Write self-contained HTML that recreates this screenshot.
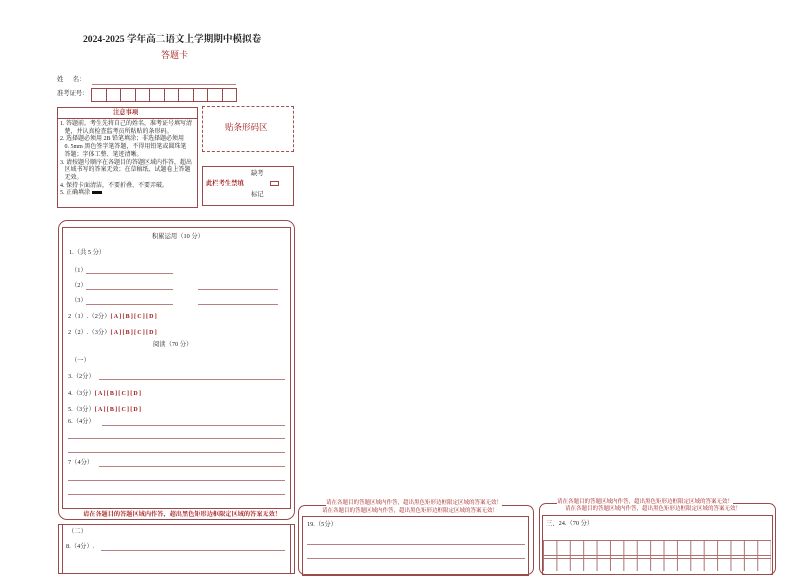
<!DOCTYPE html>
<html><head><meta charset="utf-8"><style>
body{margin:0;width:794px;height:562px;background:#fff;position:relative;overflow:hidden;font-family:"Liberation Serif","Noto Serif CJK SC","Noto Sans CJK SC",serif;color:#222;}
.a{position:absolute;white-space:nowrap;line-height:1;}
.s{font-size:6.3px;}
.r{color:#a01818;}
.b{position:absolute;border:1px solid #9a4a4a;box-sizing:border-box;}
.l{position:absolute;height:0;border-top:1px solid #b88080;}
.ab{color:#a01818;font-weight:bold;font-size:6px;letter-spacing:1.2px;}
</style></head><body>
<div class="a" style="left:83px;top:35px;font-size:9.6px;font-weight:bold;">2024-2025 学年高二语文上学期期中模拟卷</div>
<div class="a r" style="left:161px;top:51px;font-size:9px;">答题卡</div>
<div class="a s" style="left:57px;top:77px;">姓&nbsp;&nbsp;&nbsp;&nbsp;&nbsp;&nbsp;名：</div>
<div class="l" style="left:92px;top:84px;width:144px;"></div>
<div class="a s" style="left:57px;top:91px;">准考证号：</div>
<div style="position:absolute;left:91px;top:88px;display:flex;">
<div class="b" style="position:relative;width:15.5px;height:14px;"></div><div class="b" style="position:relative;width:15.5px;height:14px;margin-left:-1px"></div><div class="b" style="position:relative;width:15.5px;height:14px;margin-left:-1px"></div><div class="b" style="position:relative;width:15.5px;height:14px;margin-left:-1px"></div><div class="b" style="position:relative;width:15.5px;height:14px;margin-left:-1px"></div><div class="b" style="position:relative;width:15.5px;height:14px;margin-left:-1px"></div><div class="b" style="position:relative;width:15.5px;height:14px;margin-left:-1px"></div><div class="b" style="position:relative;width:15.5px;height:14px;margin-left:-1px"></div><div class="b" style="position:relative;width:15.5px;height:14px;margin-left:-1px"></div><div class="b" style="position:relative;width:15.5px;height:14px;margin-left:-1px"></div>
</div>
<div class="b" style="left:57px;top:107px;width:141px;height:101px;"></div>
<div class="l" style="left:57px;top:118px;width:141px;border-color:#9a4a4a"></div>
<div class="a s r" style="left:113px;top:110px;font-weight:bold;">注意事项</div>
<div class="a" style="left:60px;top:121px;font-size:6px;line-height:7.7px;">1. 答题前，考生先将自己的姓名，准考证号填写清<br>&nbsp;&nbsp;&nbsp;楚，并认真检查监考员所粘贴的条形码。<br>2. 选择题必须用 2B 铅笔填涂；非选择题必须用<br>&nbsp;&nbsp;&nbsp;0. 5mm 黑色签字笔答题，不得用铅笔或圆珠笔<br>&nbsp;&nbsp;&nbsp;答题；字体工整、笔迹清晰。<br>3. 请按题号顺序在各题目的答题区域内作答，超出<br>&nbsp;&nbsp;&nbsp;区域书写的答案无效；在草稿纸、试题卷上答题<br>&nbsp;&nbsp;&nbsp;无效。<br>4. 保持卡面清洁，不要折叠、不要弄破。<br>5. 正确填涂 <span style="display:inline-block;width:10px;height:3px;background:#111;vertical-align:middle"></span></div>
<div class="b" style="left:202px;top:106px;width:92px;height:46px;border:1px dashed #a05050;"></div>
<div class="a r" style="left:225px;top:123px;font-size:8.5px;">贴条形码区</div>
<div class="b" style="left:202px;top:166px;width:92px;height:40px;"></div>
<div class="a s" style="left:251px;top:171px;">缺考</div>
<div class="a s r" style="left:206px;top:181px;font-weight:bold;">此栏考生禁填</div>
<div class="b" style="left:270px;top:181px;width:9px;height:5px;"></div>
<div class="a s" style="left:251px;top:192px;">标记</div>

<div class="b" style="left:58px;top:220px;width:237px;height:300px;border-radius:9px;"></div>
<div class="b" style="left:62px;top:227px;width:229px;height:282px;background:#fff"></div>
<div class="a s" style="left:152px;top:234px;">积累运用（10 分）</div>
<div class="a s" style="left:69px;top:250px;">1.（共 5 分）</div>
<div class="a s" style="left:71px;top:268px;">（1）</div><div class="l" style="left:86px;top:273px;width:87px;"></div>
<div class="a s" style="left:71px;top:283px;">（2）</div><div class="l" style="left:86px;top:289px;width:87px;"></div><div class="l" style="left:198px;top:289px;width:80px;"></div>
<div class="a s" style="left:71px;top:298px;">（3）</div><div class="l" style="left:86px;top:304px;width:87px;"></div><div class="l" style="left:198px;top:304px;width:80px;"></div>
<div class="a s" style="left:68px;top:314px;">2（1）.（2分）<span class="ab">[A][B][C][D]</span></div>
<div class="a s" style="left:68px;top:330px;">2（2）.（3分）<span class="ab">[A][B][C][D]</span></div>
<div class="a s" style="left:153px;top:342px;">阅读（70 分）</div>
<div class="a s" style="left:71px;top:358px;">（一）</div>
<div class="a s" style="left:68px;top:374px;">3.（2分）</div><div class="l" style="left:99px;top:379px;width:186px;"></div>
<div class="a s" style="left:68px;top:391px;">4.（3分）<span class="ab">[A][B][C][D]</span></div>
<div class="a s" style="left:68px;top:407px;">5.（3分）<span class="ab">[A][B][C][D]</span></div>
<div class="a s" style="left:68px;top:419px;">6.（4分）</div><div class="l" style="left:102px;top:425px;width:183px;"></div>
<div class="l" style="left:68px;top:438px;width:217px;"></div><div class="l" style="left:68px;top:452px;width:217px;"></div>
<div class="a s" style="left:68px;top:460px;">7（4分）</div><div class="l" style="left:99px;top:466px;width:186px;"></div>
<div class="l" style="left:68px;top:480px;width:217px;"></div><div class="l" style="left:68px;top:494px;width:217px;"></div>
<div class="a r" style="left:83px;top:512px;font-size:6.2px;font-weight:bold;">请在各题目的答题区域内作答，超出黑色矩形边框限定区域的答案无效！</div>
<div class="b" style="left:58px;top:524px;width:237px;height:50px;"></div>
<div class="b" style="left:62px;top:524px;width:229px;height:50px;"></div>
<div class="a s" style="left:68px;top:529px;">（二）</div>
<div class="a s" style="left:66px;top:544px;">8.（4分）.</div><div class="l" style="left:101px;top:550px;width:184px;"></div>

<div class="b" style="left:298px;top:505px;width:236px;height:70px;border-radius:7px;"></div>
<div class="a r" style="left:326px;top:501px;font-size:5.5px;background:#fff;">请在各题目的答题区域内作答，超出黑色矩形边框限定区域的答案无效！</div>
<div class="a r" style="left:322px;top:509px;font-size:5.5px;">请在各题目的答题区域内作答，超出黑色矩形边框限定区域的答案无效！</div>
<div class="b" style="left:302px;top:516px;width:227px;height:60px;"></div>
<div class="a s" style="left:307px;top:522px;">19.（5分）</div>
<div class="l" style="left:307px;top:544px;width:218px;"></div><div class="l" style="left:307px;top:558px;width:218px;"></div>

<div class="b" style="left:539px;top:503px;width:237px;height:72px;border-radius:7px;"></div>
<div class="a r" style="left:557px;top:500px;font-size:5.5px;background:#fff;">请在各题目的答题区域内作答，超出黑色矩形边框限定区域的答案无效！</div>
<div class="a r" style="left:565px;top:507px;font-size:5.5px;">请在各题目的答题区域内作答，超出黑色矩形边框限定区域的答案无效！</div>
<div class="b" style="left:542px;top:515px;width:231px;height:60px;"></div>
<div class="a s" style="left:546px;top:521px;">三、24.（70 分）</div>
<div style="position:absolute;left:543px;top:540px;width:228px;height:30px;background-image:linear-gradient(90deg,#b07070 1px,transparent 1px);background-size:13.4px 100%;border-top:1px solid #b07070;"></div>
<div class="l" style="left:543px;top:555px;width:228px;border-color:#b07070"></div>
<div class="l" style="left:543px;top:558px;width:228px;border-color:#b07070"></div>
</body></html>
